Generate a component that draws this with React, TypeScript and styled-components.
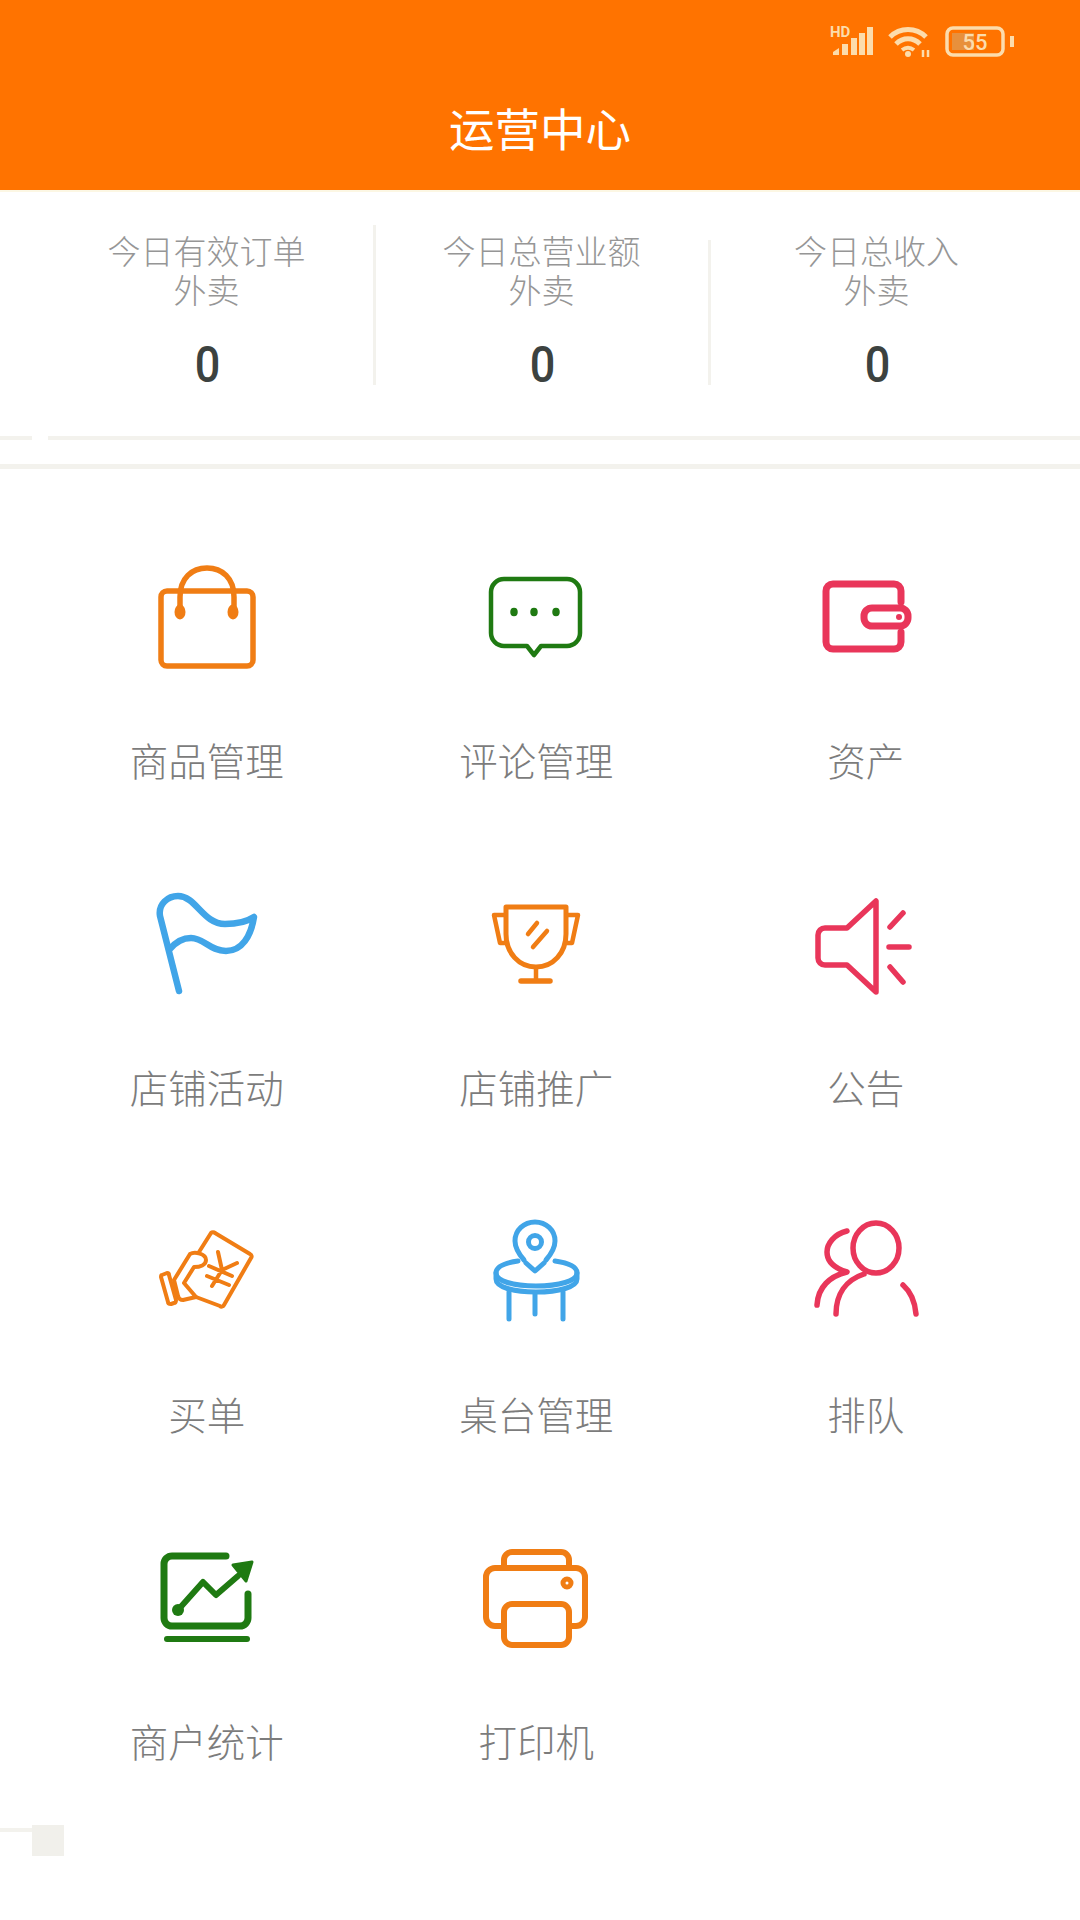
import React from "react";
import styled, { createGlobalStyle } from "styled-components";

const GlobalStyle = createGlobalStyle`
  html, body {
    margin: 0;
    padding: 0;
    background: #fff;
  }
  * {
    box-sizing: border-box;
  }
`;

const Page = styled.div`
  width: 1080px;
  min-height: 1920px;
  background: #fff;
  overflow: hidden;
  font-family: "Noto Sans CJK SC", "Noto Sans", sans-serif;
`;

const Header = styled.header`
  height: 190px;
  background: #ff7300;
  padding-top: 19px;
`;

const StatusBar = styled.div`
  height: 38px;
  padding-right: 66px;
  display: flex;
  justify-content: flex-end;
  gap: 14px;
`;

const Title = styled.h1`
  margin: 40px 0 0;
  font-size: 45.5px;
  line-height: 60px;
  font-weight: 400;
  color: #fff;
  text-align: center;
`;

const Stats = styled.section`
  display: flex;
  padding: 33px 0 0 40px;
  height: 246px;
  border-top: 2px solid #fcf7e4;
`;

const Stat = styled.div`
  width: 333px;
  height: 160px;
  padding-top: 6px;
  text-align: center;
`;

const StatLabel = styled.div`
  font-size: 33px;
  line-height: 39px;
  font-weight: 300;
  color: #969696;
`;

const StatValue = styled.div`
  margin: 32px 0 0 2px;
  font-family: Roboto, sans-serif;
  font-size: 50px;
  line-height: 48px;
  font-weight: 500;
  color: #3c4240;
  transform: scaleX(0.9);
`;

const Divider = styled.div<{ $inset: number }>`
  width: 3px;
  height: 160px;
  margin-right: -1px;
  border-top: ${(p) => p.$inset}px solid #fff;
  background: #f3f2ed;
`;

const Rule = styled.div`
  height: 5px;
  background: #f3f2ed;
`;

const BrokenRule = styled.div`
  display: flex;
  gap: 16px;
  margin-bottom: 24px;
`;

const RuleStub = styled(Rule)`
  width: 32px;
  height: 4px;
`;

const RuleRest = styled(Rule)`
  flex: 1;
  height: 4px;
`;

const Menu = styled.main`
  display: grid;
  grid-template-columns: repeat(3, 329.5px);
  row-gap: 95px;
  padding: 83px 0 0 42px;
`;

const MenuItem = styled.div`
  display: flex;
  flex-direction: column;
  align-items: center;
`;

const MenuIcon = styled.svg`
  display: block;
  width: 120px;
  height: 120px;
  fill: none;
  stroke-width: 5;
  stroke-linecap: round;
  stroke-linejoin: round;
`;

const MenuLabel = styled.div`
  margin-top: 62px;
  font-size: 38.5px;
  line-height: 50px;
  font-weight: 300;
  color: #7c7c7c;
`;

const Leftover = styled.div`
  display: flex;
  margin-top: 60px;
`;

const LeftoverLine = styled.div`
  width: 32px;
  height: 4px;
  margin-top: 3px;
  background: #f3f2ed;
`;

const LeftoverSquare = styled.div`
  width: 32px;
  height: 31px;
  background: #f1f0eb;
`;

const STATUS = "#fcdcac";
const ORANGE = "#f07d14";
const GREEN = "#1f7a12";
const RED = "#e9365a";
const BLUE = "#41a5e8";

const stats = [
  { label: "今日有效订单", inset: 0 },
  { label: "今日总营业额", inset: 15 },
  { label: "今日总收入" },
];

const BagIcon = () => (
  <g stroke={ORANGE} strokeWidth="5.5">
    <rect x="161" y="591" width="92" height="75" rx="6" />
    <path d="M180 612V597C180 578 192 568 207 568C222 568 234 578 234 597V612" />
    <ellipse cx="180" cy="612" rx="4" ry="6" fill={ORANGE} strokeWidth="3" />
    <ellipse cx="233" cy="612" rx="4" ry="6" fill={ORANGE} strokeWidth="3" />
  </g>
);

const ChatIcon = () => (
  <g stroke={GREEN} strokeWidth="4.5">
    <path d="M505 579H568A13 13 0 0 1 581 592V633A13 13 0 0 1 568 646H542L535 655L528 646H505A13 13 0 0 1 492 633V592A13 13 0 0 1 505 579Z" />
    <ellipse cx="515" cy="612" rx="3" ry="3.5" fill={GREEN} strokeWidth="1.5" />
    <ellipse cx="535" cy="612" rx="3" ry="3.5" fill={GREEN} strokeWidth="1.5" />
    <ellipse cx="557" cy="612" rx="3" ry="3.5" fill={GREEN} strokeWidth="1.5" />
  </g>
);

const WalletIcon = () => (
  <g stroke={RED} strokeWidth="7">
    <path d="M901 602V591A7 7 0 0 0 894 584H833A7 7 0 0 0 826 591V642A7 7 0 0 0 833 649H894A7 7 0 0 0 901 642V632" />
    <rect x="864" y="608" width="44" height="18" rx="8" />
    <circle cx="899" cy="617" r="1.5" fill={RED} strokeWidth="3" />
  </g>
);

const FlagIcon = () => (
  <g stroke={BLUE} strokeWidth="6.5">
    <path d="M179 991L160 916C158 904 168 896 178 896C196 896 203 924 225 924C238 924 248 921 254 917C251 936 242 951 226 951C210 951 204 938 191 938C182 938 175 943 170 949" />
  </g>
);

const TrophyIcon = () => (
  <g stroke={ORANGE} strokeWidth="4.5">
    <path d="M507 907H567V934C567 953 554 967 537 967C520 967 507 953 507 934Z" strokeWidth="5" />
    <path d="M506 915H495L501 943H506M568 915H579L573 943H568" />
    <path d="M537 968V980" />
    <path d="M522 981H551" strokeWidth="5.5" />
    <path d="M529 934L538 923M534 947L548 931" />
  </g>
);

const SpeakerIcon = () => (
  <g stroke={RED} strokeWidth="5.5">
    <path d="M876 901V992L847 965H825A7 7 0 0 1 818 958V935A7 7 0 0 1 825 928H847Z" />
    <path d="M890 927L903 913M889 947H909M890 967L903 982" />
  </g>
);

const BuyIcon = () => (
  <g stroke={ORANGE} strokeWidth="4">
    <path d="M199 1252L211 1233C212 1232 214 1232 215 1233L250 1254C252 1255 252 1257 251 1258L224 1305C223 1307 221 1307 220 1306L196 1297" />
    <path d="M196 1297L183 1300C180 1300 179 1299 178 1296L174 1280L190 1254C195 1251 206 1254 206 1260C206 1265 200 1267 194 1267L184 1283L196 1297" />
    <path d="M162 1275L167 1273C168 1273 169 1273 169 1275L176 1300C176 1302 176 1303 174 1303L171 1304C169 1304 168 1304 168 1302L161 1277C161 1276 161 1275 162 1275Z" />
    <path d="M218 1252L222 1270M237 1263L222 1270M222 1270L212 1286M209 1266L232 1276M207 1276L229 1285" />
  </g>
);

const TableIcon = () => (
  <g stroke={BLUE} strokeWidth="5">
    <path d="M525 1260C519 1253 516 1247 516 1241C516 1230 525 1222 536 1222C547 1222 556 1230 556 1241C556 1247 553 1253 547 1260" />
    <circle cx="536" cy="1242" r="6.5" />
    <path d="M527 1263L536 1271L545 1263" />
    <path d="M519 1261C505 1263 497 1267 497 1273C497 1281 514 1286 537 1286C560 1286 578 1281 578 1273C578 1267 570 1263 556 1261" />
    <path d="M497 1273V1279C497 1287 514 1292 537 1292C560 1292 578 1287 578 1279V1273" />
    <path d="M510 1292V1319M536 1293V1314M564 1292V1319" />
  </g>
);

const PeopleIcon = () => (
  <g stroke={RED} strokeWidth="5.5">
    <ellipse cx="876" cy="1248" rx="23" ry="25" />
    <path d="M836 1314C836 1294 846 1280 864 1274M903 1285C911 1292 915 1302 916 1314" />
    <path d="M847 1231C834 1234 827 1244 827 1252C827 1261 834 1268 847 1272C830 1276 818 1287 817 1305" />
  </g>
);

const ChartIcon = () => (
  <g stroke={GREEN} strokeWidth="7">
    <path d="M226 1556H172A8 8 0 0 0 164 1564V1618A8 8 0 0 0 172 1626H240A8 8 0 0 0 248 1618V1594" />
    <path d="M167 1639H247" strokeWidth="6" />
    <path d="M178 1610L203 1582L216 1595L238 1576" strokeWidth="6" />
    <circle cx="178" cy="1610" r="6" fill={GREEN} stroke="none" />
    <path d="M252 1562L233 1565L246 1581Z" fill={GREEN} strokeWidth="3" />
  </g>
);

const PrinterIcon = () => (
  <g stroke={ORANGE} strokeWidth="6">
    <path d="M505 1567V1560A8 8 0 0 1 513 1552H562A8 8 0 0 1 570 1560V1567" />
    <path d="M505 1626H496A9 9 0 0 1 487 1617V1577A9 9 0 0 1 496 1568H577A9 9 0 0 1 586 1577V1617A9 9 0 0 1 577 1626H570" />
    <rect x="505" y="1604" width="65" height="41" rx="8" />
    <circle cx="568" cy="1583" r="4" strokeWidth="5" />
  </g>
);

const menu = [
  { label: "商品管理", box: "147 552 120 120", icon: <BagIcon /> },
  { label: "评论管理", box: "477 552 120 120", icon: <ChatIcon /> },
  { label: "资产", box: "806 552 120 120", icon: <WalletIcon /> },
  { label: "店铺活动", box: "147 879 120 120", icon: <FlagIcon /> },
  { label: "店铺推广", box: "477 879 120 120", icon: <TrophyIcon /> },
  { label: "公告", box: "806 879 120 120", icon: <SpeakerIcon /> },
  { label: "买单", box: "147 1206 120 120", icon: <BuyIcon /> },
  { label: "桌台管理", box: "477 1206 120 120", icon: <TableIcon /> },
  { label: "排队", box: "806 1206 120 120", icon: <PeopleIcon /> },
  { label: "商户统计", box: "147 1533 120 120", icon: <ChartIcon /> },
  { label: "打印机", box: "477 1533 120 120", icon: <PrinterIcon /> },
];

const App = () => {
  return (
    <Page>
      <GlobalStyle />
      <Header>
        <StatusBar>
          <svg width="49" height="38" viewBox="824 19 49 38">
            <text x="829" y="37" fontFamily="Roboto, sans-serif" fontSize="15" fontWeight="700" fill={STATUS}>HD</text>
            <g fill={STATUS}>
              <path d="M832 55V52L838 48V55Z" />
              <rect x="841" y="44" width="6" height="11" />
              <rect x="850" y="38" width="6" height="17" />
              <rect x="858" y="33" width="6" height="22" />
              <rect x="866" y="27" width="6" height="28" />
            </g>
          </svg>
          <svg width="43" height="38" viewBox="887 19 43 38" fill="none" stroke={STATUS} strokeWidth="5">
            <path d="M889 37C899 27 915 27 925 37" />
            <path d="M895 44C902 37 912 37 919 44" />
            <path d="M901 50C905 47 909 47 913 50" strokeWidth="4" />
            <circle cx="907" cy="54" r="3" fill={STATUS} stroke="none" />
            <path d="M922 50V57M927 50V57" strokeWidth="2.5" />
          </svg>
          <svg width="69" height="38" viewBox="945 19 69 38" fill="none">
            <rect x="947" y="28" width="56" height="27" rx="6" stroke={STATUS} strokeWidth="3.5" />
            <rect x="952" y="33" width="22" height="17" fill="#e8903c" />
            <rect x="1010" y="36" width="4" height="11" fill={STATUS} />
            <text x="975" y="50" textAnchor="middle" fontFamily="Roboto, sans-serif" fontSize="22" fontWeight="500" fill={STATUS}>55</text>
          </svg>
        </StatusBar>
        <Title>运营中心</Title>
      </Header>

      <Stats>
        {stats.map((s) => (
          <React.Fragment key={s.label}>
            <Stat>
              <StatLabel>
                {s.label}
                <br />
                外卖
              </StatLabel>
              <StatValue>0</StatValue>
            </Stat>
            {s.inset !== undefined && <Divider $inset={s.inset} />}
          </React.Fragment>
        ))}
      </Stats>

      <BrokenRule>
        <RuleStub />
        <RuleRest />
      </BrokenRule>
      <Rule />

      <Menu>
        {menu.map((item) => (
          <MenuItem key={item.label}>
            <MenuIcon viewBox={item.box}>{item.icon}</MenuIcon>
            <MenuLabel>{item.label}</MenuLabel>
          </MenuItem>
        ))}
      </Menu>

      <Leftover>
        <LeftoverLine />
        <LeftoverSquare />
      </Leftover>
    </Page>
  );
};

export default App;
